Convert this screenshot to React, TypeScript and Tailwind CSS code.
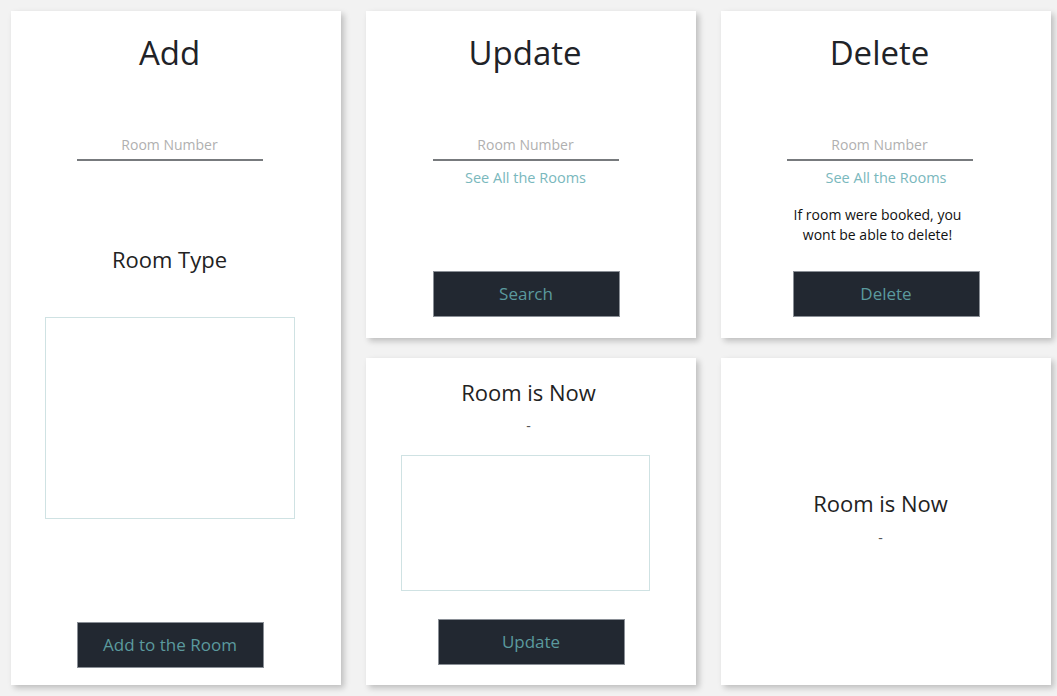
import React from "react";

const font = { fontFamily: '"Open Sans", "Noto Sans", sans-serif' };

function Card({ className, children }: { className?: string; children: React.ReactNode }) {
  return (
    <div className={`flex flex-col items-center bg-white shadow-[3px_3px_6px_rgba(0,0,0,0.22)] ${className ?? ""}`}>
      {children}
    </div>
  );
}

function Title({ text, className }: { text: string; className?: string }) {
  return <h1 className={`text-[33px] leading-[40px] text-[#1f2328] ${className ?? ""}`}>{text}</h1>;
}

function RoomInput({ className }: { className?: string }) {
  return (
    <input
      placeholder="Room Number"
      className={`h-[33px] w-[186px] border-b-2 border-[#777a7d] bg-transparent pt-[2px] text-center text-[14px] text-[#333] outline-none placeholder:text-[#b0b0b0] ${className ?? ""}`}
    />
  );
}

function SeeAll({ className }: { className?: string }) {
  return (
    <a className={`text-[14.5px] leading-[20px] text-[#7ab8bd] ${className ?? ""}`}>See All the Rooms</a>
  );
}

function DarkButton({ label, className }: { label: string; className?: string }) {
  return (
    <button
      className={`h-[46px] w-[187px] border border-[#8a8f96] bg-[#222831] text-[17px] text-[#5b9a9e] ${className ?? ""}`}
    >
      {label}
    </button>
  );
}

export default function App() {
  return (
    <div style={font} className="min-h-[696px] bg-[#f2f2f2] p-[11px]">
      <div className="grid grid-cols-[330px_330px_330px] grid-rows-[327px_327px] gap-x-[25px] gap-y-[20px]">
        {/* Add */}
        <Card className="row-span-2">
          <Title text="Add" className="mt-[22px] mr-[13px]" />
          <RoomInput className="mt-[55px] mr-[13px]" />
          <h2 className="mt-[83px] mr-[13px] text-[22px] leading-[30px] text-[#222]">Room Type</h2>
          <textarea className="mt-[43px] mr-[13px] h-[202px] w-[250px] resize-none border border-[#cfe2e3] outline-none" />
          <DarkButton label="Add to the Room" className="mt-[103px] mr-[12px]" />
        </Card>

        {/* Update */}
        <Card>
          <Title text="Update" className="mt-[22px] mr-[12px]" />
          <RoomInput className="mt-[55px] mr-[11px]" />
          <SeeAll className="mt-[7px] mr-[11px]" />
          <DarkButton label="Search" className="mt-[83px] mr-[10px]" />
        </Card>

        {/* Delete */}
        <Card>
          <Title text="Delete" className="mt-[22px] mr-[13px]" />
          <RoomInput className="mt-[55px] mr-[13px]" />
          <SeeAll className="mt-[7px]" />
          <p className="mt-[17px] mr-[17px] w-[200px] text-center text-[14px] leading-[20px] text-[#111]">
            If room were booked, you wont be able to delete!
          </p>
          <DarkButton label="Delete" className="mt-[26px]" />
        </Card>

        {/* Update result */}
        <Card>
          <h2 className="mt-[19px] mr-[5px] text-[22px] leading-[30px] text-[#222]">Room is Now</h2>
          <span className="mt-[9px] mr-[5px] text-[14px] leading-[20px] text-[#555]">-</span>
          <textarea className="mt-[19px] mr-[12px] h-[136px] w-[249px] resize-none border border-[#cfe2e3] outline-none" />
          <DarkButton label="Update" className="mt-[28px]" />
        </Card>

        {/* Delete result */}
        <Card>
          <h2 className="mt-[130px] mr-[11px] text-[22px] leading-[30px] text-[#222]">Room is Now</h2>
          <span className="mt-[10px] mr-[11px] text-[14px] leading-[20px] text-[#555]">-</span>
        </Card>
      </div>
    </div>
  );
}
